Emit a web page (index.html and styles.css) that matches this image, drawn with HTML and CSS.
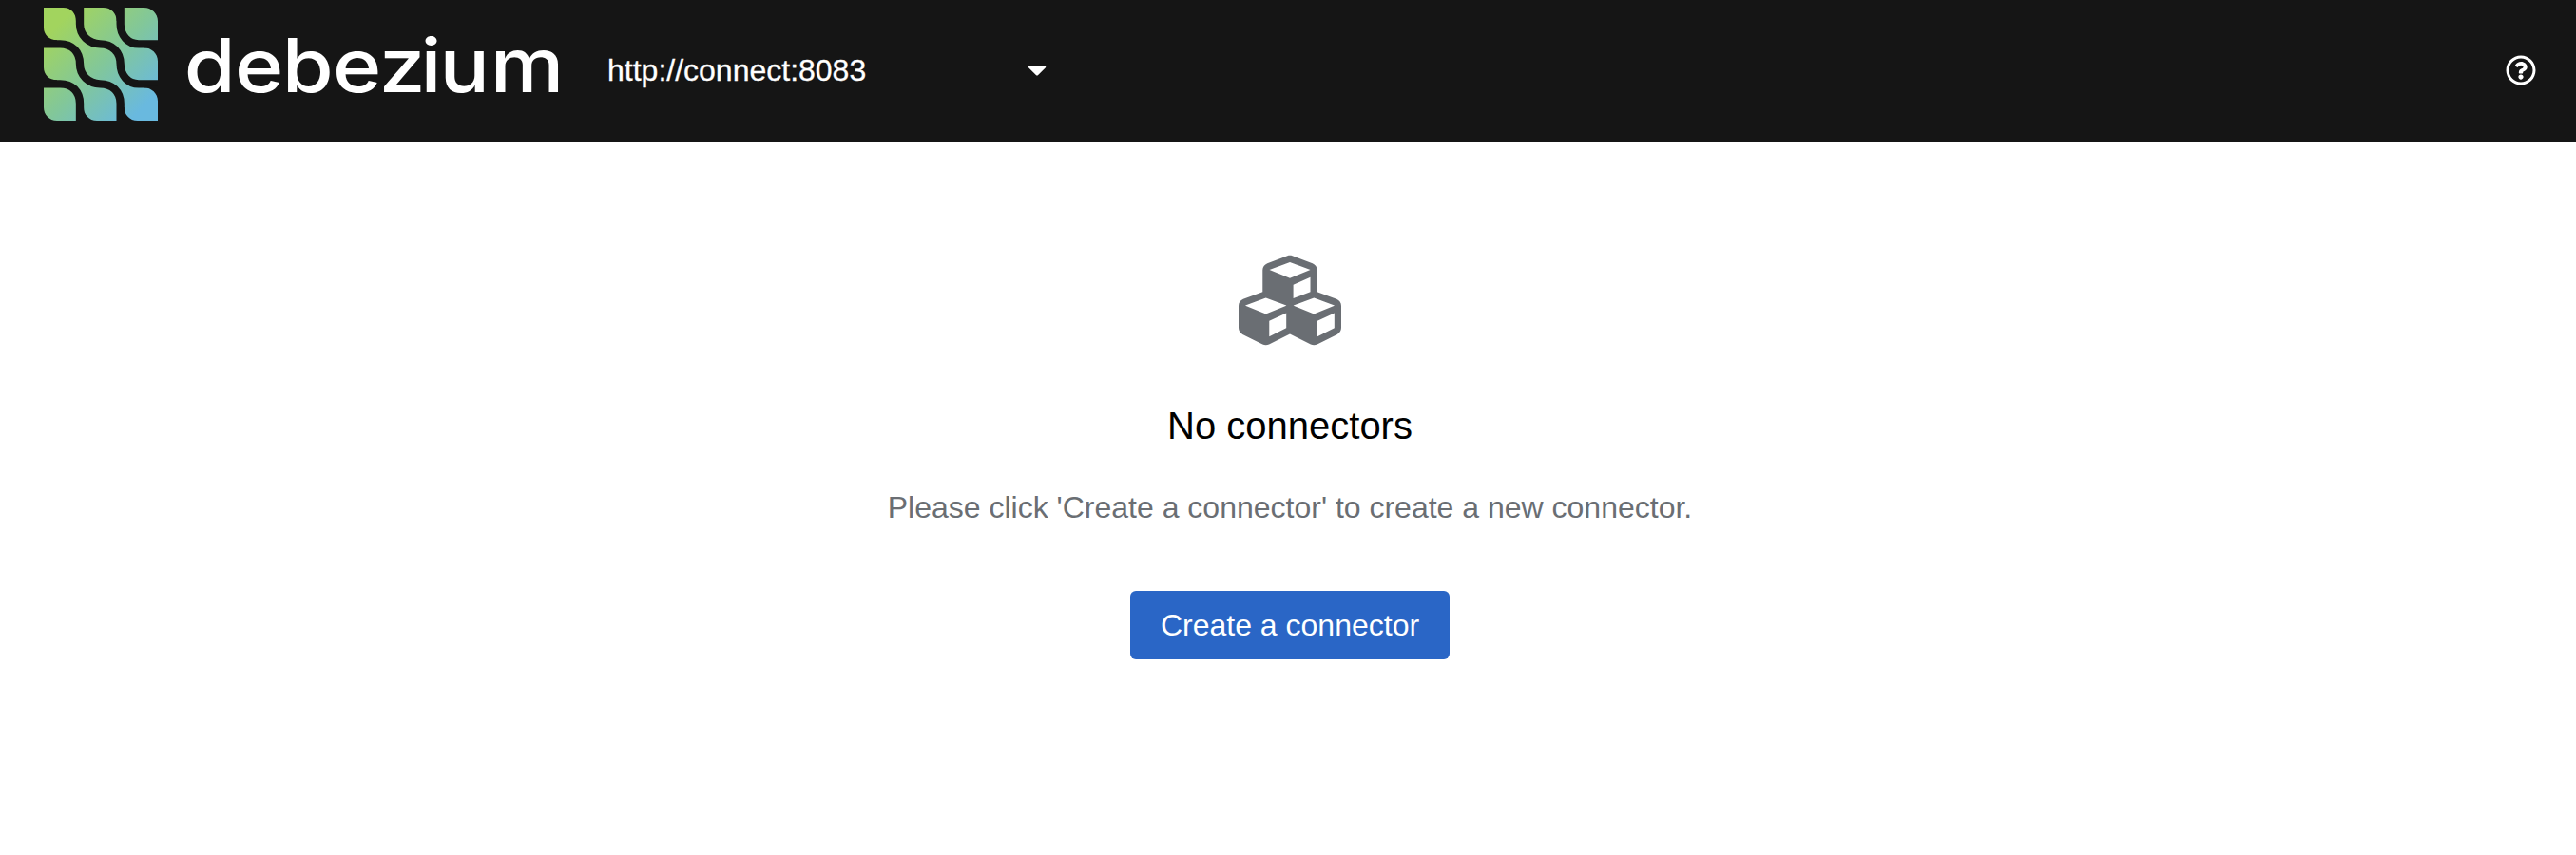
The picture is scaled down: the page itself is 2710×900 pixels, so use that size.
FILE: index.html
```html
<!DOCTYPE html>
<html lang="en">
<head>
<meta charset="utf-8">
<title>Debezium</title>
<link rel="stylesheet" href="styles.css">
</head>
<body>
<header class="masthead">
  <div class="brand">
    <svg class="brand-mark" viewBox="48 24 360 357" preserveAspectRatio="none" aria-hidden="true">
      <defs>
        <linearGradient id="mark" gradientUnits="userSpaceOnUse" x1="98" y1="74" x2="362" y2="338">
          <stop offset="0" stop-color="#a2d45e"/>
          <stop offset="0.5" stop-color="#82c799"/>
          <stop offset="1" stop-color="#69b9df"/>
        </linearGradient>
      </defs>
      <rect x="48" y="24" width="360" height="357" fill="url(#mark)"/>
      <g class="mark-gap">
        <path d="M290 20V76C290 112 314 139 348 139H412"/>
        <path d="M162 20V76C162 112 190 139 226 139C264 139 290 165 290 202C290 238 314 265 348 265H412"/>
        <path d="M44 139H100C138 139 162 165 162 202C162 238 190 265 226 265C264 265 290 290 290 327V385"/>
        <path d="M44 265H100C138 265 162 290 162 327V385"/>
      </g>
      <g class="mark-corner">
        <path d="M110 24C134 24 150 43 150 66H156V20H110Z"/>
        <path d="M236 24C261 24 278 43 278 66H284V20H236Z"/>
        <path d="M364 24C388 24 408 43 408 66H412V20H364Z"/>
        <path d="M364 151C388 151 408 170 408 193H412V146H364Z"/>
        <path d="M364 277C388 277 408 296 408 319H412V272H364Z"/>
        <path d="M48 88C48 110 65 127 90 127V133H44V88Z"/>
        <path d="M48 213C48 236 65 253 90 253V259H44V213Z"/>
        <path d="M48 339C48 362 65 381 90 381V385H44V339Z"/>
        <path d="M174 339C174 362 191 381 216 381V385H168V339Z"/>
        <path d="M302 339C302 362 319 381 344 381V385H296V339Z"/>
      </g>
    </svg>
    <svg class="brand-name" viewBox="0 0 400 100">
      <text class="brand-text" transform="scale(1.12 1)" y="97.3" x="-2 45.5 90 137.5 181 220 238 285.5">debezium</text>
    </svg>
  </div>
  <div class="cluster">
    <span>http://connect:8083</span>
    <svg class="caret" viewBox="0 0 320 512"><path d="M31.3 192h257.3c17.8 0 26.7 21.5 14.1 34.1L174.1 354.7c-7.8 7.8-20.5 7.8-28.3 0L17.2 226.1C4.6 213.5 13.5 192 31.3 192z"/></svg>
  </div>
  <svg class="help" viewBox="0 0 512 512"><path d="M256 8C119.043 8 8 119.083 8 256c0 136.997 111.043 248 248 248s248-111.003 248-248C504 119.083 392.957 8 256 8zm0 448c-110.532 0-200-89.431-200-200 0-110.495 89.472-200 200-200 110.491 0 200 89.471 200 200 0 110.53-89.431 200-200 200zm107.244-255.2c0 67.052-72.421 68.084-72.421 92.863V300c0 6.627-5.373 12-12 12h-45.647c-6.627 0-12-5.373-12-12v-8.659c0-35.745 27.1-50.034 47.579-61.516 17.561-9.845 28.324-16.541 28.324-29.579 0-17.246-21.999-28.693-39.784-28.693-23.189 0-33.894 10.977-48.942 29.969-4.057 5.12-11.46 6.071-16.666 2.124l-27.824-21.098c-5.107-3.872-6.251-11.066-2.644-16.363C184.846 131.491 214.94 112 261.794 112c49.071 0 101.45 38.304 101.45 88.8zM298 368c0 23.159-18.841 42-42 42s-42-18.841-42-42 18.841-42 42-42 42 18.841 42 42z"/></svg>
</header>
<main class="empty-state">
  <svg class="cubes" viewBox="0 0 512 512"><path d="M488.6 250.2L392 214V105.5c0-15-9.3-28.4-23.4-33.7l-100-37.5c-8.1-3.1-17.1-3.1-25.3 0l-100 37.5c-14.1 5.3-23.4 18.7-23.4 33.7V214l-96.6 36.2C9.3 255.5 0 268.9 0 283.9V394c0 13.6 7.7 26.1 19.9 32.2l100 50c10.1 5.1 22.1 5.1 32.2 0l103.9-52 103.9 52c10.1 5.1 22.1 5.1 32.2 0l100-50c12.2-6.1 19.9-18.6 19.9-32.2V283.9c0-15-9.3-28.4-23.4-33.7zM358 214.8l-85 31.9v-68.2l85-37v73.3zM154 104.1l102-38.2 102 38.2v.6l-102 41.4-102-41.4v-.6zm84 291.1l-85 42.5v-79.1l85-38.8v75.4zm0-112l-102 41.4-102-41.4v-.6l102-38.2 102 38.2v.6zm240 112l-85 42.5v-79.1l85-38.8v75.4zm0-112l-102 41.4-102-41.4v-.6l102-38.2 102 38.2v.6z"/></svg>
  <h1 class="title">No connectors</h1>
  <p class="body">Please click 'Create a connector' to create a new connector.</p>
  <button class="primary">Create a connector</button>
</main>
</body>
</html>
```
FILE: styles.css
```css
body {
  margin: 0;
  background: #fff;
  font-family: "Liberation Sans", Arial, sans-serif;
  font-size: 32px;
  line-height: 48px;
}
.masthead {
  box-sizing: border-box;
  display: flex;
  height: 150px;
  padding: 8px 42px 0 46px;
  background: #151515;
  color: #fff;
}
.brand {
  display: flex;
  gap: 30px;
  width: 593px;
}
.brand-mark {
  flex: none;
  width: 120px;
  height: 119px;
}
.mark-gap {
  fill: none;
  stroke: #151515;
  stroke-width: 25;
}
.mark-corner {
  fill: #151515;
}
.brand-name {
  flex: none;
  width: 400px;
  height: 100px;
  margin-top: -8px;
  overflow: visible;
}
.brand-text {
  font-family: Inter, sans-serif;
  font-size: 78px;
  font-weight: 500;
  fill: #fff;
}
.cluster {
  display: flex;
  justify-content: space-between;
  width: 462px;
  height: 48px;
  margin-top: 42px;
  -webkit-text-stroke: 0.3px #fff;
}
.caret {
  width: 20px;
  height: 32px;
  margin-top: 7px;
  fill: #fff;
}
.help {
  width: 32px;
  height: 32px;
  margin: 50px 0 0 auto;
  fill: #fff;
}
.empty-state {
  display: flex;
  flex-direction: column;
  align-items: center;
  padding: 112px 0 0 4px;
}
.cubes {
  width: 108px;
  height: 108px;
  fill: #6a6e73;
}
.title {
  margin: 48px 0 0;
  font-size: 40px;
  font-weight: 400;
  line-height: 60px;
  color: #000;
}
.body {
  margin: 32px 0 0;
  color: #6a6e73;
}
.primary {
  width: 336px;
  height: 72px;
  margin-top: 64px;
  padding: 0;
  border: 0;
  border-radius: 6px;
  background: #2a66c6;
  color: #fff;
  font: inherit;
}
```
